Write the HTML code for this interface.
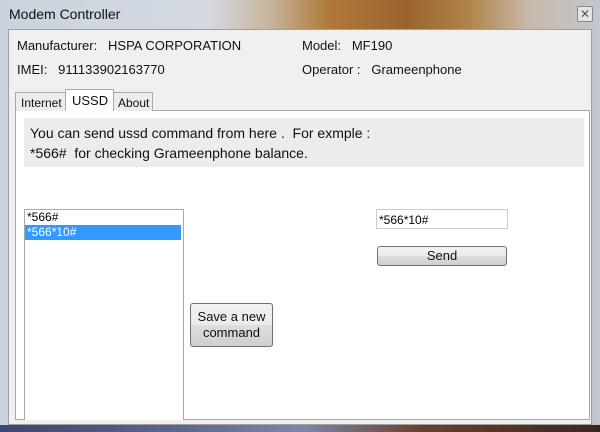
<!DOCTYPE html>
<html><head><meta charset="utf-8"><style>
*{margin:0;padding:0;box-sizing:border-box}
body{width:600px;height:432px;overflow:hidden;position:relative;font-family:"Liberation Sans",sans-serif;background:#3a3a48}
.frame{position:absolute;left:0;top:0;width:600px;height:432px;background:linear-gradient(90deg,#c9d3df 0%,#d4d9e0 35%,#c7b49c 45%,#b07838 55%,#9a6430 68%,#b0834a 78%,#c8b8a8 88%,#c3c6cf 100%)}
.bottom{position:absolute;left:0;top:425px;width:600px;height:7px;background:linear-gradient(90deg,#3c4670 0%,#5a6790 30%,#7c88a8 50%,#6a4030 70%,#3a2820 100%)}
.title{position:absolute;left:9px;top:6px;font-size:14px;color:#111}
.close{position:absolute;left:577px;top:6px;width:16px;height:16px;border:1px solid #888;border-radius:2px;background:#e4e4e8;font-size:12px;line-height:14px;text-align:center;color:#555}
.client{position:absolute;left:8px;top:29px;width:584px;height:396px;background:#f0f0f0;border:1px solid #a0a0a0}
.t{position:absolute;font-size:13px;color:#111;white-space:nowrap}
.tab{position:absolute;top:92px;height:19px;border:1px solid #aaa;border-bottom:none;background:#ececec;font-size:12px;padding:3px 0 0 5px;color:#111}
.page{position:absolute;left:15px;top:110px;width:575px;height:310px;background:#fff;border:1px solid #a8a8a8}
.info{position:absolute;left:24px;top:118px;width:560px;height:49px;background:#ececec;font-family:"Liberation Sans",sans-serif;font-size:14px;color:#111;padding:5px 0 0 6px;line-height:20px}
.list{position:absolute;left:24px;top:209px;width:160px;height:211px;border:1px solid #aaa;border-bottom:none;background:#fff;font-size:12px}
.list div{height:15px;line-height:15px;padding-left:2px}
.sel{background:#3399ff;color:#fff;margin-right:2px}
.inp{position:absolute;left:376px;top:209px;width:132px;height:20px;border:1px solid #ccc;background:#fff;font-size:12px;padding:3px 2px}
.btn{position:absolute;border:1px solid #707070;border-radius:3px;background:linear-gradient(#f2f2f2 0%,#ebebeb 48%,#dddddd 52%,#cfcfcf 100%);font-size:13px;text-align:center;color:#111}
</style></head><body>
<div class="frame"></div><div class="bottom"></div>
<div class="title">Modem Controller</div>
<div class="close">✕</div>
<div class="client"></div>
<div class="t" style="left:17px;top:38px">Manufacturer:&nbsp;&nbsp; HSPA CORPORATION</div>
<div class="t" style="left:302px;top:38px">Model:&nbsp;&nbsp; MF190</div>
<div class="t" style="left:17px;top:62px">IMEI:&nbsp;&nbsp; 911133902163770</div>
<div class="t" style="left:302px;top:62px">Operator :&nbsp;&nbsp; Grameenphone</div>
<div class="page"></div>
<div class="tab" style="left:15px;width:51px">Internet</div>
<div class="tab" style="left:113px;width:40px;padding-left:4px">About</div>
<div class="tab" style="left:65px;top:89px;height:22px;width:49px;background:#fff;font-size:13px;padding:3px 0 0 6px">USSD</div>
<div class="info">You can send ussd command from here .&nbsp; For exmple :<br>*566#&nbsp; for checking Grameenphone balance.</div>
<div class="list"><div>*566#</div><div class="sel">*566*10#</div></div>
<div class="inp">*566*10#</div>
<div class="btn" style="left:377px;top:246px;width:130px;height:20px;line-height:18px">Send</div>
<div class="btn" style="left:190px;top:303px;width:83px;height:44px;line-height:16px;padding-top:5px">Save a new<br>command</div>
</body></html>
